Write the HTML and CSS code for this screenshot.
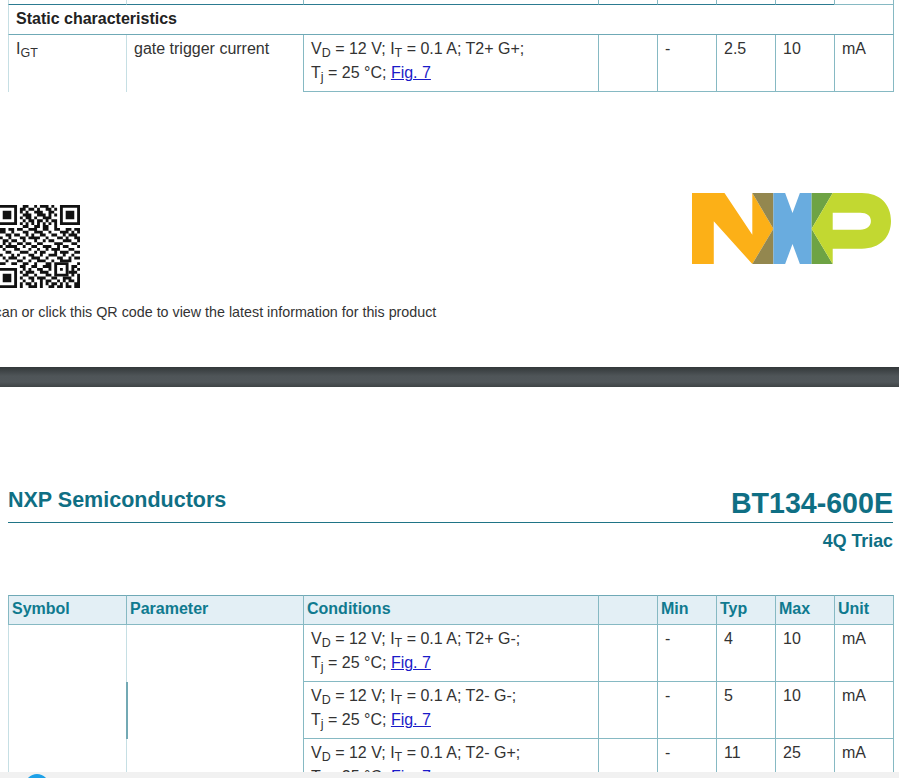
FILE: index.html
```html
<!DOCTYPE html>
<html lang="en">
<head>
<meta charset="utf-8">
<title>BT134-600E 4Q Triac</title>
<link rel="stylesheet" href="styles.css">
</head>
<body>
<section class="sheet-end">
  <table class="spec">
    <colgroup><col class="c1"><col class="c2"><col class="c3"><col class="c4"><col class="c5"><col class="c6"><col class="c7"><col class="c8"></colgroup>
    <tr class="stub"><td class="dark-b light-l"></td><td class="dark-b light-l"></td><td class="dark-b"></td><td class="dark-b"></td><td class="dark-b"></td><td class="dark-b"></td><td class="dark-b"></td><td class="end"></td></tr>
    <tr class="row-head"><td colspan="8" class="group end light-l">Static characteristics</td></tr>
    <tr class="row-data">
      <td class="light-l no-b">I<span class="sub">GT</span></td>
      <td class="light-l no-b">gate trigger current</td>
      <td>V<span class="sub">D</span> = 12 V; I<span class="sub">T</span> = 0.1 A; T2+ G+;<br>T<span class="sub">j</span> = 25 °C; <a href="#">Fig. 7</a></td>
      <td></td><td>-</td><td>2.5</td><td>10</td><td class="end">mA</td>
    </tr>
  </table>
  <div class="brand-row">
    <svg class="qr" viewBox="0 0 29 29" aria-label="QR code">
      <path class="qr-fill" d="M0 0h7v7h-7zM1 1v5h5v-5zM2 2h3v3h-3zM22 0h7v7h-7zM23 1v5h5v-5zM24 2h3v3h-3zM0 22h7v7h-7zM1 23v5h5v-5zM2 24h3v3h-3zM20 20h5v5h-5zM21 21v3h3v-3zM22 22h1v1h-1z"/>
      <path class="qr-data" d="M9 .5h2m2 0h1m1 0h3m1 0h1M8 1.5h2m1 0h2m1 0h1m2 0h2m1 0h1M8 2.5h1m1 0h1m2 0h3m2 0h2M9 3.5h3m2 0h3m1 0h1m1 0h1M8 4.5h1m1 0h2m1 0h1m2 0h3M9 5.5h1m1 0h2m1 0h2m1 0h1m1 0h2M8 6.5h1m1 0h1m1 0h1m1 0h1m1 0h1m1 0h1m1 0h1M9 7.5h2m2 0h2m1 0h2m2 0h1M0 8.5h3m1 0h2m1 0h2m2 0h3m2 0h2m2 0h2m2 0h2m1 0h2M1 9.5h2m2 0h1m3 0h2m2 0h3m2 0h1m3 0h3m1 0h1m1 0h1M0 10.5h1m2 0h2m1 0h2m2 0h1m1 0h1m2 0h2m2 0h2m2 0h1m1 0h3M0 11.5h2m2 0h1m3 0h2m1 0h4m2 0h1m3 0h2m1 0h1m2 0h2M2 12.5h2m1 0h2m2 0h1m3 0h1m2 0h1m1 0h2m3 0h3m2 0h1M0 13.5h1m1 0h1m1 0h1m2 0h2m1 0h2m2 0h2m4 0h3m3 0h2M1 14.5h1m1 0h4m2 0h1m2 0h2m2 0h3m2 0h1m1 0h2m3 0h1M0 15.5h1m1 0h1m3 0h2m3 0h1m2 0h1m2 0h1m1 0h3m3 0h2M3 16.5h2m3 0h3m2 0h1m1 0h2m3 0h1m1 0h3m2 0h2M0 17.5h2m3 0h1m1 0h1m3 0h2m2 0h1m2 0h3m2 0h1m2 0h1M2 18.5h1m1 0h3m2 0h1m2 0h3m2 0h1m3 0h2m2 0h1m1 0h2M0 19.5h1m2 0h1m3 0h2m2 0h1m2 0h3m2 0h1m2 0h4M1 20.5h2m2 0h2m2 0h2m2 0h1m3 0h2m9 0h2M8 21.5h2m2 0h2m2 0h3m7 0h2M9 22.5h1m1 0h1m2 0h2m2 0h1m7 0h1m1 0h1M8 23.5h1m1 0h3m2 0h3m7 0h3M9 24.5h2m2 0h1m3 0h2m7 0h1m1 0h1M8 25.5h1m2 0h2m1 0h3m2 0h2m2 0h3m2 0h1M9 26.5h1m2 0h1m2 0h1m1 0h2m2 0h1m1 0h1m1 0h2m1 0h1M8 27.5h1m1 0h2m1 0h1m1 0h1m1 0h1m1 0h2m1 0h1m1 0h1m2 0h2M8 28.5h1m2 0h3m1 0h1m2 0h2m1 0h2m1 0h2m1 0h2"/>
    </svg>
    <svg class="logo" viewBox="38 40 594 213" preserveAspectRatio="none" aria-label="NXP logo">
      <polygon class="l-orange" points="38,40 135,40 218,165 218,40 281,147 218,253 103,125 103,253 38,253"/>
      <polygon class="l-olive" points="218,40 281,40 281,147"/>
      <polygon class="l-olive" points="281,147 281,253 218,253"/>
      <polygon class="l-blue" points="281,40 316,40 338,100 360,40 395,40 395,253 360,253 338,193 316,253 281,253"/>
      <polygon class="l-green" points="395,40 458,40 395,147"/>
      <polygon class="l-green" points="395,147 458,253 395,253"/>
      <path class="l-lime" d="M458 40H545C600 40 632 75 632 124C632 172 600 207 545 207H458V253L395 147ZM458 99V150H540C560 150 572 140 572 124C572 108 560 99 540 99Z" fill-rule="evenodd"/>
    </svg>
  </div>
  <p class="qr-caption">Scan or click this QR code to view the latest information for this product</p>
</section>
<div class="page-gap"></div>
<section class="sheet">
  <header class="sheet-head">
    <div class="vendor">NXP Semiconductors</div>
    <div class="part">BT134-600E</div>
  </header>
  <div class="kind">4Q Triac</div>
  <table class="spec">
    <colgroup><col class="c1"><col class="c2"><col class="c3"><col class="c4"><col class="c5"><col class="c6"><col class="c7"><col class="c8"></colgroup>
    <tr class="row-head th">
      <td class="tight">Symbol</td><td class="tight">Parameter</td><td class="tight">Conditions</td><td></td><td class="tight">Min</td><td class="tight">Typ</td><td class="tight">Max</td><td class="tight end">Unit</td>
    </tr>
    <tr class="row-data">
      <td class="light-l no-b"></td><td class="light-l no-b"></td>
      <td>V<span class="sub">D</span> = 12 V; I<span class="sub">T</span> = 0.1 A; T2+ G-;<br>T<span class="sub">j</span> = 25 °C; <a href="#">Fig. 7</a></td>
      <td></td><td>-</td><td>4</td><td>10</td><td class="end">mA</td>
    </tr>
    <tr class="row-data">
      <td class="light-l no-b"></td><td class="no-b heavy-l"></td>
      <td>V<span class="sub">D</span> = 12 V; I<span class="sub">T</span> = 0.1 A; T2- G-;<br>T<span class="sub">j</span> = 25 °C; <a href="#">Fig. 7</a></td>
      <td></td><td>-</td><td>5</td><td>10</td><td class="end">mA</td>
    </tr>
    <tr class="row-data">
      <td class="light-l no-b"></td><td class="light-l no-b"></td>
      <td>V<span class="sub">D</span> = 12 V; I<span class="sub">T</span> = 0.1 A; T2- G+;<br>T<span class="sub">j</span> = 25 °C; <a href="#">Fig. 7</a></td>
      <td></td><td>-</td><td>11</td><td>25</td><td class="end">mA</td>
    </tr>
  </table>
</section>
<div class="viewer-bar"><span class="viewer-dot"></span></div>
</body>
</html>
```
FILE: styles.css
```css
html, body {
  margin: 0;
  padding: 0;
  height: 778px;
  overflow: hidden;
  background: #fff;
  font-family: "Liberation Sans", Arial, sans-serif;
  color: #333;
}
body { position: relative; }

.sheet-end { height: 367px; padding-left: 8px; box-sizing: border-box; overflow: hidden; }
.sheet { padding: 97px 6px 0 8px; }

.spec {
  border-collapse: separate;
  border-spacing: 0;
  table-layout: fixed;
  width: 886px;
  font-size: 16px;
  line-height: 24px;
}
.c1 { width: 118px; }
.c2 { width: 177px; }
.c3 { width: 295px; }
.c4, .c5, .c6, .c7 { width: 59px; }
.c8 { width: 60px; }

.spec td {
  box-sizing: border-box;
  padding: 2px 4px 6px 7px;
  border-left: 1px solid #86b9c3;
  border-bottom: 1px solid #86b9c3;
  vertical-align: top;
}
.spec td.end { border-right: 1px solid #86b9c3; }
.spec td.light-l { border-left-color: #c6dfe4; }
.spec td.heavy-l { border-left: 2px solid #73a9b4; }
.spec td.no-b { border-bottom: 0; }
.spec td.dark-b { border-bottom-color: #2c7b91; }

.stub { height: 5px; }
.stub td { padding: 0; font-size: 0; line-height: 0; }
.row-head { height: 30px; }
.row-head td { padding-top: 2px; padding-bottom: 0; }
.row-data { height: 57px; }
.spec td.group { font-weight: 700; color: #222; padding-left: 7px; border-bottom-color: #6fa9b6; }

.th td { background: #e3eff5; border-top: 1px solid #6fa9b6; }
.spec .th td.tight { padding: 1px 0 0 3px; font-weight: 700; color: #0f7a8f; }

.sub { font-size: 0.78em; vertical-align: -0.28em; line-height: 0; }
a { color: #1a1ac8; text-decoration: underline; }

.brand-row {
  display: flex;
  justify-content: space-between;
  align-items: flex-start;
  margin: 101px 0 0 -11px;
  width: 894px;
}
.qr { width: 83px; height: 83px; margin-top: 12px; display: block; flex: none; }
.qr-fill { fill: #111; fill-rule: evenodd; }
.qr-data { fill: none; stroke: #111; stroke-width: 1; }
.logo { width: 199px; height: 71px; display: block; flex: none; }
.l-orange { fill: #fcb017; }
.l-olive { fill: #93874f; }
.l-blue { fill: #69acdf; }
.l-green { fill: #6ea344; }
.l-lime { fill: #c2d831; }

.qr-caption {
  margin: 16px 0 0 -23px;
  font-size: 14.3px;
  line-height: 16px;
  color: #333;
  white-space: nowrap;
}

.page-gap {
  height: 20px;
  background: linear-gradient(#33383a, #4f5558 45%, #50565a 75%, #3f4446);
}

.sheet-head {
  display: flex;
  justify-content: space-between;
  align-items: flex-end;
  padding-bottom: 3px;
  border-bottom: 1px solid #1f7486;
}
.vendor { font-size: 21.5px; line-height: 32px; font-weight: 700; color: #0f6f84; margin-bottom: 3px; }
.part { font-size: 28.6px; line-height: 32px; font-weight: 700; color: #0f6f84; }
.kind {
  margin: 9px 0 45px;
  text-align: right;
  font-size: 17.8px;
  line-height: 18px;
  font-weight: 700;
  color: #0f6f84;
}

.viewer-bar {
  position: absolute;
  left: 0;
  right: 0;
  bottom: 0;
  height: 6px;
  background: #f1f1f1;
  overflow: hidden;
}
.viewer-dot {
  position: absolute;
  left: 25px;
  top: 2px;
  width: 24px;
  height: 24px;
  border-radius: 50%;
  background: #1ea1e8;
}
```
